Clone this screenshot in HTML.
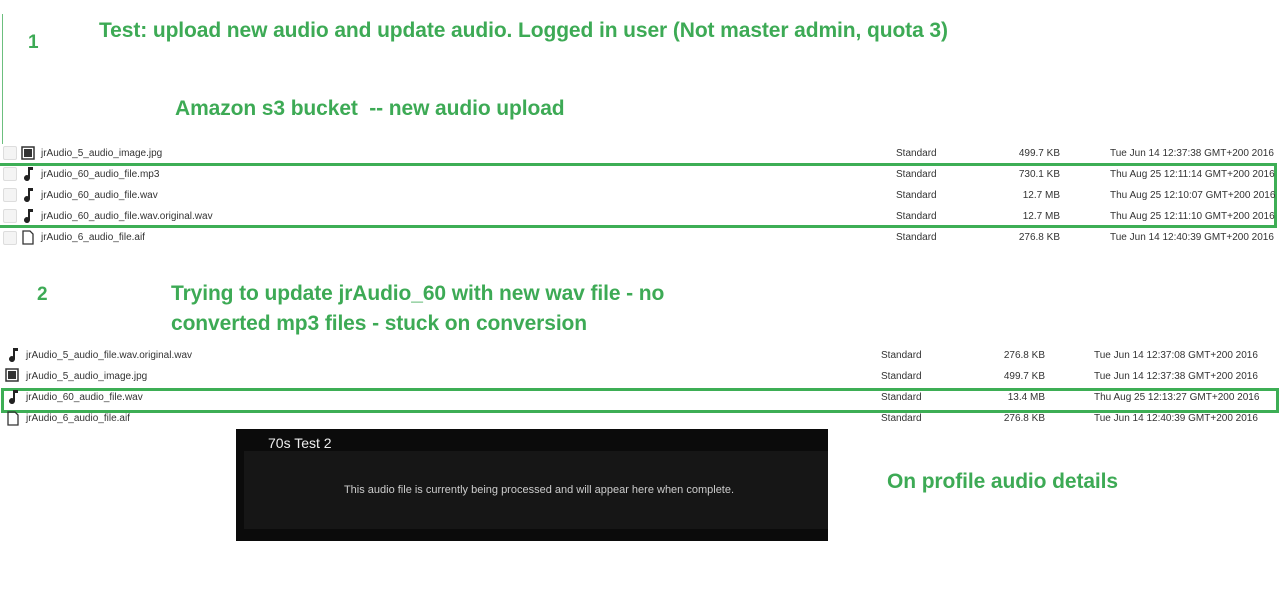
<!DOCTYPE html>
<html><head><style>
body{margin:0;width:1280px;height:613px;background:#fff;position:relative;overflow:hidden;font-family:"Liberation Sans",Arial,sans-serif}
.g{position:absolute;color:#3daa55;font-weight:bold;font-size:21px;white-space:nowrap;letter-spacing:-0.1px}
.r{position:absolute;font-size:10px;color:#333;white-space:nowrap}
.ic{position:absolute}
.cb{position:absolute;width:12px;height:12px;border:1px solid #ddd;border-radius:2px;background:#f4f4f4}
.ln{position:absolute;background:#3dae55}
</style></head><body>
<div class="ln" style="left:2px;top:14px;width:1px;height:130px;background:#6cbf7e"></div>
<div class="g" style="left:28px;top:32px;font-size:19px">1</div>
<div class="g" style="left:99px;top:19px">Test: upload new audio and update audio. Logged in user (Not master admin, quota 3)</div>
<div class="g" style="left:175px;top:97px">Amazon s3 bucket&nbsp; -- new audio upload</div>

<div class="ln" style="left:0;top:163px;width:1277px;height:3px"></div>
<div class="ln" style="left:0;top:225px;width:1277px;height:3px"></div>
<div class="ln" style="left:1274px;top:163px;width:3px;height:65px"></div>

<div class="cb" style="left:3px;top:146px"></div>
<svg class="ic" style="left:21px;top:146px" width="14" height="14"><rect x="1" y="1" width="12" height="12" fill="none" stroke="#333" stroke-width="1.5"/><rect x="3" y="3" width="8" height="8" fill="#333"/></svg>
<div class="r" style="left:41px;top:148px">jrAudio_5_audio_image.jpg</div>
<div class="r" style="left:896px;top:148px">Standard</div>
<div class="r" style="left:1000px;top:148px;width:60px;text-align:right">499.7 KB</div>
<div class="r" style="left:1110px;top:148px">Tue Jun 14 12:37:38 GMT+200 2016</div>

<div class="cb" style="left:3px;top:167px"></div>
<svg class="ic" style="left:22px;top:166px" width="12" height="15"><path d="M7 1h4v3H8v8a3 3 0 1 1-2-2.8V1z" fill="#222"/></svg>
<div class="r" style="left:41px;top:169px">jrAudio_60_audio_file.mp3</div>
<div class="r" style="left:896px;top:169px">Standard</div>
<div class="r" style="left:1000px;top:169px;width:60px;text-align:right">730.1 KB</div>
<div class="r" style="left:1110px;top:169px">Thu Aug 25 12:11:14 GMT+200 2016</div>

<div class="cb" style="left:3px;top:188px"></div>
<svg class="ic" style="left:22px;top:187px" width="12" height="15"><path d="M7 1h4v3H8v8a3 3 0 1 1-2-2.8V1z" fill="#222"/></svg>
<div class="r" style="left:41px;top:190px">jrAudio_60_audio_file.wav</div>
<div class="r" style="left:896px;top:190px">Standard</div>
<div class="r" style="left:1000px;top:190px;width:60px;text-align:right">12.7 MB</div>
<div class="r" style="left:1110px;top:190px">Thu Aug 25 12:10:07 GMT+200 2016</div>

<div class="cb" style="left:3px;top:209px"></div>
<svg class="ic" style="left:22px;top:208px" width="12" height="15"><path d="M7 1h4v3H8v8a3 3 0 1 1-2-2.8V1z" fill="#222"/></svg>
<div class="r" style="left:41px;top:211px">jrAudio_60_audio_file.wav.original.wav</div>
<div class="r" style="left:896px;top:211px">Standard</div>
<div class="r" style="left:1000px;top:211px;width:60px;text-align:right">12.7 MB</div>
<div class="r" style="left:1110px;top:211px">Thu Aug 25 12:11:10 GMT+200 2016</div>

<div class="cb" style="left:3px;top:231px"></div>
<svg class="ic" style="left:22px;top:230px" width="12" height="15"><path d="M1 1h7l3 3v10H1z" fill="none" stroke="#333" stroke-width="1.3"/></svg>
<div class="r" style="left:41px;top:232px">jrAudio_6_audio_file.aif</div>
<div class="r" style="left:896px;top:232px">Standard</div>
<div class="r" style="left:1000px;top:232px;width:60px;text-align:right">276.8 KB</div>
<div class="r" style="left:1110px;top:232px">Tue Jun 14 12:40:39 GMT+200 2016</div>

<div class="g" style="left:37px;top:284px;font-size:19px">2</div>
<div class="g" style="left:171px;top:279px;line-height:30px">Trying to update jrAudio_60 with new wav file - no<br>converted mp3 files - stuck on conversion</div>

<svg class="ic" style="left:7px;top:347px" width="12" height="15"><path d="M7 1h4v3H8v8a3 3 0 1 1-2-2.8V1z" fill="#222"/></svg>
<div class="r" style="left:26px;top:350px">jrAudio_5_audio_file.wav.original.wav</div>
<div class="r" style="left:881px;top:350px">Standard</div>
<div class="r" style="left:985px;top:350px;width:60px;text-align:right">276.8 KB</div>
<div class="r" style="left:1094px;top:350px">Tue Jun 14 12:37:08 GMT+200 2016</div>

<svg class="ic" style="left:5px;top:368px" width="14" height="14"><rect x="1" y="1" width="12" height="12" fill="none" stroke="#333" stroke-width="1.5"/><rect x="3" y="3" width="8" height="8" fill="#333"/></svg>
<div class="r" style="left:26px;top:371px">jrAudio_5_audio_image.jpg</div>
<div class="r" style="left:881px;top:371px">Standard</div>
<div class="r" style="left:985px;top:371px;width:60px;text-align:right">499.7 KB</div>
<div class="r" style="left:1094px;top:371px">Tue Jun 14 12:37:38 GMT+200 2016</div>

<div style="position:absolute;left:1px;top:388px;width:1272px;height:19px;border:3px solid #3dae55"></div>
<svg class="ic" style="left:7px;top:389px" width="12" height="15"><path d="M7 1h4v3H8v8a3 3 0 1 1-2-2.8V1z" fill="#222"/></svg>
<div class="r" style="left:26px;top:392px">jrAudio_60_audio_file.wav</div>
<div class="r" style="left:881px;top:392px">Standard</div>
<div class="r" style="left:985px;top:392px;width:60px;text-align:right">13.4 MB</div>
<div class="r" style="left:1094px;top:392px">Thu Aug 25 12:13:27 GMT+200 2016</div>

<svg class="ic" style="left:7px;top:411px" width="12" height="15"><path d="M1 1h7l3 3v10H1z" fill="none" stroke="#333" stroke-width="1.3"/></svg>
<div class="r" style="left:26px;top:413px">jrAudio_6_audio_file.aif</div>
<div class="r" style="left:881px;top:413px">Standard</div>
<div class="r" style="left:985px;top:413px;width:60px;text-align:right">276.8 KB</div>
<div class="r" style="left:1094px;top:413px">Tue Jun 14 12:40:39 GMT+200 2016</div>

<div style="position:absolute;left:236px;top:429px;width:592px;height:112px;background:#0b0b0b"></div>
<div style="position:absolute;left:244px;top:451px;width:584px;height:78px;background:#161616"></div>
<div style="position:absolute;left:268px;top:435px;color:#eee;font-size:14px">70s Test 2</div>
<div style="position:absolute;left:244px;top:484px;width:590px;text-align:center;color:#ccc;font-size:11px">This audio file is currently being processed and will appear here when complete.</div>

<div class="g" style="left:887px;top:470px">On profile audio details</div>
</body></html>
